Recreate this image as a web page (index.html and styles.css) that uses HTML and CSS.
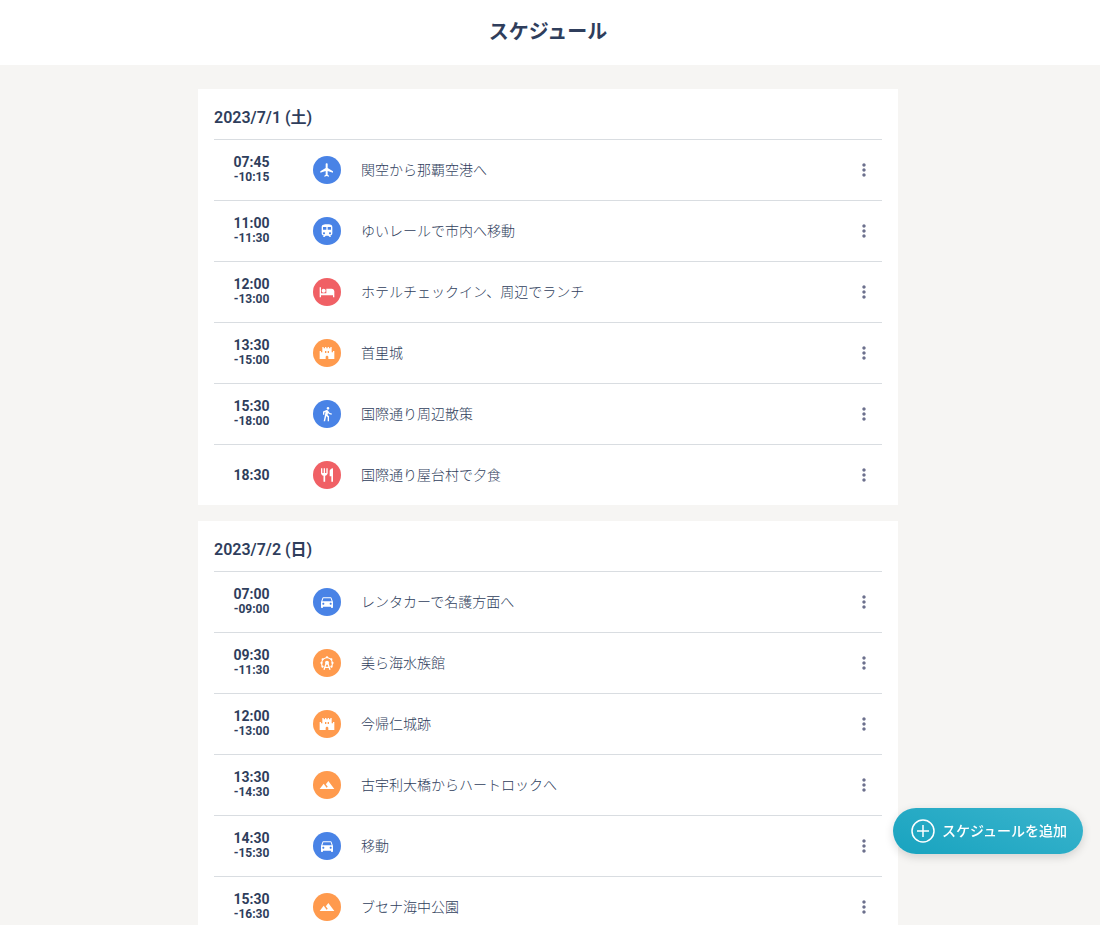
FILE: index.html
```html
<!DOCTYPE html>
<html lang="ja">
<head>
<meta charset="utf-8">
<meta name="viewport" content="width=device-width, initial-scale=1">
<title>スケジュール</title>
<link rel="stylesheet" href="styles.css">
</head>
<body>
<svg class="sprite" aria-hidden="true">
  <symbol id="flight" viewBox="0 0 24 24"><path d="M21 16v-2l-8-5V3.500c0-.83-.67-1.500-1.500-1.500S10 2.670 10 3.500V9l-8 5v2l8-2.500V19l-2 1.500V22l3.500-1 3.500 1v-1.500L13 19v-5.500l8 2.500z"/></symbol>
  <symbol id="train" viewBox="0 0 24 24"><path d="M12 2c-4 0-8 .5-8 4v9.500C4 17.430 5.570 19 7.500 19L6 20.500v.5h2.230l2-2H14l2 2h2v-.5L16.500 19c1.930 0 3.500-1.570 3.500-3.500V6c0-3.500-3.580-4-8-4zM7.500 17c-.83 0-1.500-.67-1.500-1.500S6.670 14 7.500 14s1.500.67 1.500 1.500S8.330 17 7.500 17zm3.500-7H6V6h5v4zm2 0V6h5v4h-5zm3.500 7c-.83 0-1.500-.67-1.500-1.500s.67-1.500 1.500-1.500 1.500.67 1.500 1.500-.67 1.500-1.500 1.500z"/></symbol>
  <symbol id="hotel" viewBox="0 0 24 24"><path d="M7 13c1.660 0 3-1.340 3-3S8.660 7 7 7s-3 1.340-3 3 1.340 3 3 3zm12-6h-8v7H3V5H1v15h2v-3h18v3h2v-9c0-2.210-1.790-4-4-4z"/></symbol>
  <symbol id="castle" viewBox="0 0 24 24"><path d="M21 9v2h-2V3h-2v2h-2V3h-2v2h-2V3H9v2H7V3H5v8H3V9H1v12h9v-3c0-1.100.9-2 2-2s2 .9 2 2v3h9V9h-2zm-10 3H9V9h2v3zm4 0h-2V9h2v3z"/></symbol>
  <symbol id="walk" viewBox="0 0 24 24"><path d="M13.500 5.500c1.100 0 2-.9 2-2s-.9-2-2-2-2 .9-2 2 .9 2 2 2zM9.800 8.900 7 23h2.100l1.800-8 2.100 2v6h2v-7.500l-2.100-2 .6-3C14.800 12 16.800 13 19 13v-2c-1.900 0-3.500-1-4.300-2.400l-1-1.600c-.4-.6-1-1-1.700-1-.3 0-.5.1-.8.1L6 8.300V13h2V9.600l1.800-.7"/></symbol>
  <symbol id="food" viewBox="0 0 24 24"><path d="M11 9H9V2H7v7H5V2H3v7c0 2.120 1.660 3.840 3.750 3.970V22h2.500v-9.030C11.340 12.840 13 11.120 13 9V2h-2v7zm5-3v8h2.500v8H21V2c-2.760 0-5 2.240-5 4z"/></symbol>
  <symbol id="car" viewBox="0 0 24 24"><path d="M18.920 6.010C18.720 5.420 18.160 5 17.500 5h-11c-.66 0-1.210.42-1.420 1.010L3 12v8c0 .55.45 1 1 1h1c.55 0 1-.45 1-1v-1h12v1c0 .55.45 1 1 1h1c.55 0 1-.45 1-1v-8l-2.080-5.990zM6.500 16c-.83 0-1.500-.67-1.500-1.500S5.670 13 6.500 13s1.500.67 1.500 1.500S7.330 16 6.500 16zm11 0c-.83 0-1.500-.67-1.500-1.500s.67-1.500 1.500-1.500 1.500.67 1.500 1.500-.67 1.500-1.500 1.500zM5 11l1.500-4.500h11L19 11H5z"/></symbol>
  <symbol id="wheel" viewBox="0 0 24 24"><path fill="none" stroke="currentColor" stroke-width="1.600" d="M6 18 4.500 16.500 3.800 12 5.500 6.500 12 3.500l6.500 3 1.700 5.500-.7 4.500L18 18"/><circle cx="12" cy="11.500" r="3"/><path fill="none" stroke="currentColor" stroke-width="2" d="m10.500 13-3 9M13.500 13l3 9M9 18.500h6"/><circle cx="12" cy="3.500" r="1.700"/><circle cx="5.500" cy="6.500" r="1.700"/><circle cx="18.500" cy="6.500" r="1.700"/><circle cx="3.800" cy="12" r="1.700"/><circle cx="20.200" cy="12" r="1.700"/><circle cx="5.300" cy="17.500" r="1.700"/><circle cx="18.700" cy="17.500" r="1.700"/></symbol>
  <symbol id="landscape" viewBox="0 0 24 24"><path d="m14 6-3.750 5 2.850 3.800-1.600 1.200C9.810 13.750 7 10 7 10l-6 8h22L14 6z"/></symbol>
  <symbol id="more" viewBox="0 0 24 24"><path d="M12 8c1.100 0 2-.9 2-2s-.9-2-2-2-2 .9-2 2 .9 2 2 2zm0 2c-1.100 0-2 .9-2 2s.9 2 2 2 2-.9 2-2-.9-2-2-2zm0 6c-1.100 0-2 .9-2 2s.9 2 2 2 2-.9 2-2-.9-2-2-2z"/></symbol>
</svg>
<div class="page">
  <header class="header"><h1 class="title">スケジュール</h1></header>
  <main class="days">
    <section class="day">
      <h2 class="date">2023/7/1 (土)</h2>
      <ul class="list">
        <li class="row"><div class="time"><span class="start">07:45</span><span class="end">-10:15</span></div><span class="badge move"><svg class="icon"><use href="#flight"/></svg></span><span class="name">関空から那覇空港へ</span><button class="menu" aria-label="メニュー"><svg class="dots"><use href="#more"/></svg></button></li>
        <li class="row"><div class="time"><span class="start">11:00</span><span class="end">-11:30</span></div><span class="badge move"><svg class="icon"><use href="#train"/></svg></span><span class="name">ゆいレールで市内へ移動</span><button class="menu" aria-label="メニュー"><svg class="dots"><use href="#more"/></svg></button></li>
        <li class="row"><div class="time"><span class="start">12:00</span><span class="end">-13:00</span></div><span class="badge stay"><svg class="icon"><use href="#hotel"/></svg></span><span class="name">ホテルチェックイン、周辺でランチ</span><button class="menu" aria-label="メニュー"><svg class="dots"><use href="#more"/></svg></button></li>
        <li class="row"><div class="time"><span class="start">13:30</span><span class="end">-15:00</span></div><span class="badge sight"><svg class="icon"><use href="#castle"/></svg></span><span class="name">首里城</span><button class="menu" aria-label="メニュー"><svg class="dots"><use href="#more"/></svg></button></li>
        <li class="row"><div class="time"><span class="start">15:30</span><span class="end">-18:00</span></div><span class="badge move"><svg class="icon"><use href="#walk"/></svg></span><span class="name">国際通り周辺散策</span><button class="menu" aria-label="メニュー"><svg class="dots"><use href="#more"/></svg></button></li>
        <li class="row"><div class="time"><span class="start">18:30</span></div><span class="badge stay"><svg class="icon"><use href="#food"/></svg></span><span class="name">国際通り屋台村で夕食</span><button class="menu" aria-label="メニュー"><svg class="dots"><use href="#more"/></svg></button></li>
      </ul>
    </section>
    <section class="day">
      <h2 class="date">2023/7/2 (日)</h2>
      <ul class="list">
        <li class="row"><div class="time"><span class="start">07:00</span><span class="end">-09:00</span></div><span class="badge move"><svg class="icon"><use href="#car"/></svg></span><span class="name">レンタカーで名護方面へ</span><button class="menu" aria-label="メニュー"><svg class="dots"><use href="#more"/></svg></button></li>
        <li class="row"><div class="time"><span class="start">09:30</span><span class="end">-11:30</span></div><span class="badge sight"><svg class="icon"><use href="#wheel"/></svg></span><span class="name">美ら海水族館</span><button class="menu" aria-label="メニュー"><svg class="dots"><use href="#more"/></svg></button></li>
        <li class="row"><div class="time"><span class="start">12:00</span><span class="end">-13:00</span></div><span class="badge sight"><svg class="icon"><use href="#castle"/></svg></span><span class="name">今帰仁城跡</span><button class="menu" aria-label="メニュー"><svg class="dots"><use href="#more"/></svg></button></li>
        <li class="row"><div class="time"><span class="start">13:30</span><span class="end">-14:30</span></div><span class="badge sight"><svg class="icon"><use href="#landscape"/></svg></span><span class="name">古宇利大橋からハートロックへ</span><button class="menu" aria-label="メニュー"><svg class="dots"><use href="#more"/></svg></button></li>
        <li class="row"><div class="time"><span class="start">14:30</span><span class="end">-15:30</span></div><span class="badge move"><svg class="icon"><use href="#car"/></svg></span><span class="name">移動</span><button class="menu" aria-label="メニュー"><svg class="dots"><use href="#more"/></svg></button></li>
        <li class="row"><div class="time"><span class="start">15:30</span><span class="end">-16:30</span></div><span class="badge sight"><svg class="icon"><use href="#landscape"/></svg></span><span class="name">ブセナ海中公園</span><button class="menu" aria-label="メニュー"><svg class="dots"><use href="#more"/></svg></button></li>
      </ul>
    </section>
  </main>
</div>
<button class="add"><svg class="plus" viewBox="0 0 24 24" aria-hidden="true"><circle cx="12" cy="12" r="11"/><path d="M12 6v12M6 12h12"/></svg><span class="add-label">スケジュールを追加</span></button>
</body>
</html>
```
FILE: styles.css
```css
* { box-sizing: border-box; }

body {
  margin: 0;
  background: #f6f5f3;
  color: #2f3e5c;
  font-family: Roboto, "Noto Sans CJK JP", sans-serif;
}

.sprite { display: none; }

.page {
  height: 100vh;
  overflow-y: auto;
  scrollbar-width: none;
}

.header {
  padding: 17px 20px 18px 16px;
  background: #fff;
}

.title {
  margin: 0;
  font-size: 20px;
  line-height: 30px;
  font-weight: 600;
  text-align: center;
}

.days {
  display: flex;
  flex-direction: column;
  align-items: center;
  gap: 16px;
  padding: 24px 20px 24px 16px;
}

.day {
  width: 100%;
  max-width: 700px;
  padding: 17px 16px 0;
  background: #fff;
}

.date {
  margin: 0 0 9px;
  font-size: 16px;
  line-height: 24px;
  font-weight: 600;
}

.list {
  margin: 0;
  padding: 0;
  list-style: none;
}

.row {
  display: flex;
  align-items: center;
  min-height: 61px;
  border-top: 1px solid #d9dde1;
}

.time {
  display: flex;
  flex-direction: column;
  flex: none;
  width: 75px;
  margin-right: 24px;
  text-align: center;
  font-weight: 700;
}

.start {
  font-size: 14px;
  line-height: 16px;
}

.end {
  padding-bottom: 2px;
  font-size: 12px;
  line-height: 14px;
}

.badge {
  display: flex;
  align-items: center;
  justify-content: center;
  flex: none;
  width: 28px;
  height: 28px;
  margin-right: 20px;
  border-radius: 50%;
  color: #fff;
}

.move { background: #4983e6; }
.stay { background: #f06065; }
.sight { background: #ff9a4d; }

.icon {
  width: 16px;
  height: 16px;
  fill: currentColor;
}

.name {
  flex: 1;
  font-size: 14px;
  line-height: 20px;
  font-weight: 300;
}

.menu {
  display: flex;
  align-items: center;
  justify-content: center;
  width: 36px;
  height: 36px;
  padding: 0;
  border: 0;
  background: none;
  color: #6c708d;
}

.dots {
  width: 20px;
  height: 20px;
  fill: currentColor;
}

.add {
  position: fixed;
  right: 17px;
  bottom: 71px;
  display: flex;
  align-items: center;
  gap: 7px;
  height: 46px;
  padding: 0 16px 0 18px;
  border: 0;
  border-radius: 23px;
  background: linear-gradient(20deg, #18a3bf, #3ab4cd);
  box-shadow: 0 3px 10px rgba(0, 0, 0, 0.15);
  color: #fff;
  font-family: inherit;
  font-size: 14px;
  font-weight: 500;
}

.add-label { padding-bottom: 2px; }

.plus {
  width: 24px;
  height: 24px;
  fill: none;
  stroke: currentColor;
  stroke-width: 1.5;
}
```
